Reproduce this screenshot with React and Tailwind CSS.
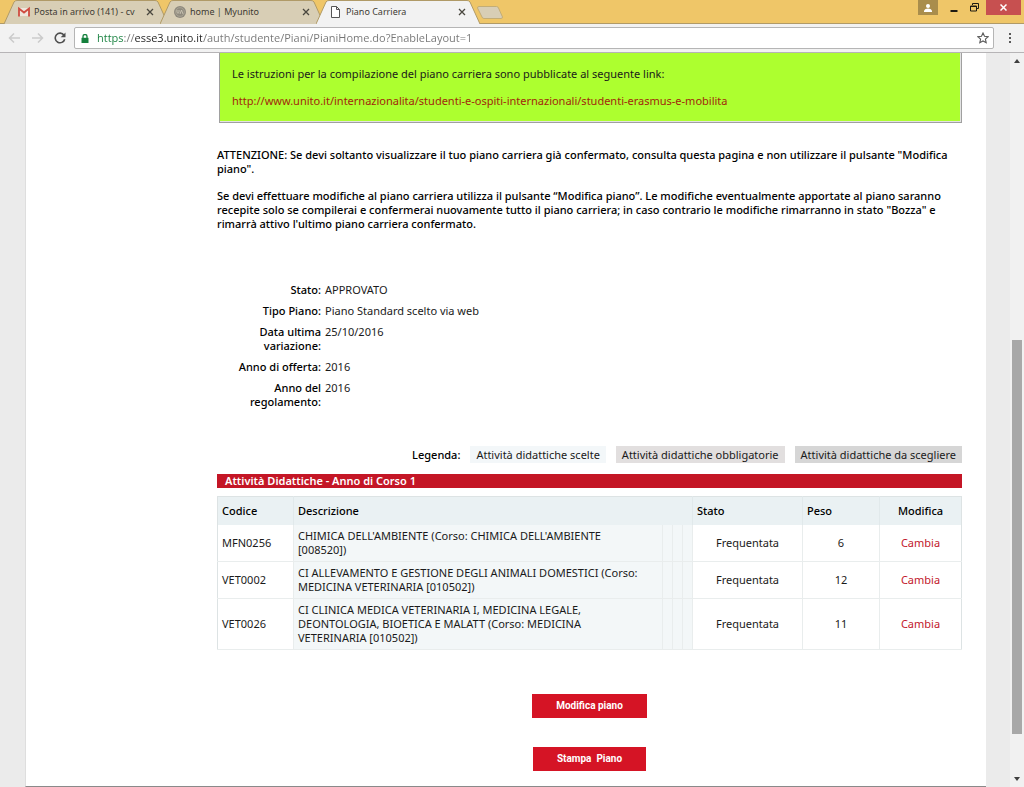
import React from 'react';

const tabs = [
  { title: 'Posta in arrivo (141) - cv', icon: 'mail', active: false },
  { title: 'home | Myunito', icon: 'unito', active: false },
  { title: 'Piano Carriera', icon: 'page', active: true },
];

const dettagli = [
  { label: 'Stato:', value: 'APPROVATO' },
  { label: 'Tipo Piano:', value: 'Piano Standard scelto via web' },
  { label: 'Data ultima variazione:', value: '25/10/2016' },
  { label: 'Anno di offerta:', value: '2016' },
  { label: 'Anno del regolamento:', value: '2016' },
];

const attivita = [
  {
    codice: 'MFN0256',
    descrizione: "CHIMICA DELL'AMBIENTE (Corso: CHIMICA DELL'AMBIENTE [008520])",
    stato: 'Frequentata',
    peso: 6,
  },
  {
    codice: 'VET0002',
    descrizione: 'CI ALLEVAMENTO E GESTIONE DEGLI ANIMALI DOMESTICI (Corso: MEDICINA VETERINARIA [010502])',
    stato: 'Frequentata',
    peso: 12,
  },
  {
    codice: 'VET0026',
    descrizione: 'CI CLINICA MEDICA VETERINARIA I, MEDICINA LEGALE, DEONTOLOGIA, BIOETICA E MALATT (Corso: MEDICINA VETERINARIA [010502])',
    stato: 'Frequentata',
    peso: 11,
  },
];

const TabIcon = ({ name }) => {
  if (name === 'mail') {
    return (
      <svg className="w-3 h-3 shrink-0" viewBox="0 0 12 12">
        <path d="M1 2h10v8H1z" fill="#eee6dc" />
        <path d="M1 10.500V2.500L6 6.500l5-4v8" fill="none" stroke="#cf4b3f" strokeWidth="1.800" />
      </svg>
    );
  }
  if (name === 'unito') {
    return (
      <svg className="w-3 h-3 shrink-0" viewBox="0 0 12 12">
        <circle cx="6" cy="6" r="6" fill="#8f8a7e" />
        <circle cx="6" cy="6" r="4.300" fill="none" stroke="#b9b2a0" strokeWidth="0.600" />
        <path d="M3 4v2.500q1 1.500 2 0V4M6 8l1.500-4L9 8" fill="none" stroke="#cdc6b4" strokeWidth="0.900" />
      </svg>
    );
  }
  return (
    <svg className="w-3 h-3 shrink-0" viewBox="0 0 12 12">
      <path d="M1.500 0.500h5l3 3v8h-8zM6.500 0.500v3h3" fill="#fff" stroke="#555" />
    </svg>
  );
};

const Tab = ({ tab }) => (
  <div className={`relative h-6 w-[164px] -mr-2 flex items-center pl-3.5 pr-3.5 ${tab.active ? 'z-10' : ''}`}>
    <svg className="absolute inset-0 w-full h-full" viewBox="0 0 164 24" preserveAspectRatio="none">
      <path
        d="M0 24L10 2Q11 0.500 13 0.500H151Q153 0.500 154 2L164 24"
        fill={tab.active ? '#f2f2f2' : '#d8ceb5'}
        stroke="#b09a67"
      />
    </svg>
    <button className="relative flex-1 min-w-0 flex items-center gap-1 text-left text-[9px] text-[#3d3a33]">
      <TabIcon name={tab.icon} />
      <span className="whitespace-nowrap">{tab.title}</span>
    </button>
    <button aria-label="Chiudi scheda" className="relative">
      <svg className="w-2 h-2" viewBox="0 0 8 8">
        <path d="M1 1l6 6M7 1L1 7" stroke="#4a473f" strokeWidth="1.300" />
      </svg>
    </button>
  </div>
);

const TabStrip = () => (
  <div className="h-6 bg-[#efc668] flex justify-between border-b border-[#b09a67]">
    <div className="flex pl-1">
      {tabs.map((tab) => (
        <Tab key={tab.title} tab={tab} />
      ))}
      <button aria-label="Nuova scheda" className="ml-1 pt-1.5 self-start">
        <svg className="w-7 h-[13px]" viewBox="0 0 28 13">
          <path d="M3 0.500h17.500q1.500 0 2 1.500l4 9q0 1.500-1.500 1.500H8q-1.500 0-2-1.500L1.500 2q0-1.500 1.500-1.500z" fill="#d8ceb5" stroke="#c3ad76" />
        </svg>
      </button>
    </div>
    <div className="flex items-start pr-[3px]">
      <button aria-label="Utente" className="w-5 h-[15px] bg-[#a98d4c] flex items-center justify-center mr-1.5">
        <svg className="w-2 h-2" viewBox="0 0 8 8">
          <circle cx="4" cy="2" r="2" fill="#fff" />
          <path d="M0 8V6.500Q1 4.500 4 4.500T8 6.500V8z" fill="#fff" />
        </svg>
      </button>
      <button aria-label="Riduci a icona" className="w-5 h-[15px] flex items-center justify-center">
        <svg className="w-2 h-2" viewBox="0 0 8 8">
          <path d="M0.500 7h7" stroke="#1d1a12" strokeWidth="2" />
        </svg>
      </button>
      <button aria-label="Ripristina" className="w-5 h-[15px] flex items-center justify-center mr-0.5">
        <svg className="w-[9px] h-[9px]" viewBox="0 0 9 9">
          <path d="M2.500 2V0.500h6v5H7M0.500 3h6v5h-6zM0.500 3.500h6" fill="none" stroke="#1d1a12" />
        </svg>
      </button>
      <button aria-label="Chiudi" className="w-[35px] h-[15px] bg-[#c75050] flex items-center justify-center">
        <svg className="w-[7px] h-[7px]" viewBox="0 0 7 7">
          <path d="M0.500 0.500l6 6M6.500 0.500l-6 6" stroke="#fff" strokeWidth="1.500" />
        </svg>
      </button>
    </div>
  </div>
);

const Toolbar = () => (
  <div className="h-[29px] bg-[#f2f2f2] border-b border-[#b6b4b6] flex items-center px-2 font-['Open_Sans',sans-serif]">
    <button aria-label="Indietro" className="mr-3">
      <svg className="w-3 h-3" viewBox="0 0 12 12">
        <path d="M12 6H1.500M6 1.500L1.500 6 6 10.500" fill="none" stroke="#cbcbcb" strokeWidth="1.500" />
      </svg>
    </button>
    <button aria-label="Avanti" className="mr-2.5">
      <svg className="w-3 h-3" viewBox="0 0 12 12">
        <path d="M0 6h10.500M6 1.500L10.500 6 6 10.500" fill="none" stroke="#cbcbcb" strokeWidth="1.500" />
      </svg>
    </button>
    <button aria-label="Ricarica" className="mr-2">
      <svg className="w-3 h-3" viewBox="0 0 12 12">
        <path d="M10 3.200A4.800 4.800 0 1 0 10.700 7.200" fill="none" stroke="#4f4f4f" strokeWidth="1.600" />
        <path d="M11.500 0.500v4.800H6.700z" fill="#4f4f4f" />
      </svg>
    </button>
    <div className="flex-1 h-[22px] bg-white border border-[#b5b5b5] rounded-xs flex items-center pl-1.5 pr-1 mr-3.5">
      <svg className="w-2 h-[9px] mr-2 shrink-0" viewBox="0 0 8 9">
        <path d="M2 4V2.500a2 2 0 0 1 4 0V4" fill="none" stroke="#15803d" strokeWidth="1.300" />
        <path d="M0.500 3.800h7V9h-7z" fill="#15803d" />
      </svg>
      <input
        type="text"
        aria-label="Indirizzo"
        defaultValue="https://esse3.unito.it/auth/studente/Piani/PianiHome.do?EnableLayout=1"
        className="flex-1 min-w-0 text-[11px] text-transparent bg-clip-text bg-[linear-gradient(90deg,#15803d_27px,#757575_27px,#757575_38px,#222222_38px,#222222_105px,#757575_105px)] focus:outline-none"
      />
      <button aria-label="Preferiti">
        <svg className="w-3 h-3" viewBox="0 0 12 12">
          <path d="M6 1l1.500 3.300 3.600 0.400-2.700 2.400 0.800 3.600L6 8.900l-3.200 1.800 0.800-3.600L0.900 4.700l3.600-0.400z" fill="none" stroke="#5a5a5a" strokeWidth="1.100" />
        </svg>
      </button>
    </div>
    <button aria-label="Menu">
      <svg className="w-1 h-3 mr-1" viewBox="0 0 4 12">
        <path d="M1 1h2v2H1zM1 5h2v2H1zM1 9h2v2H1z" fill="#5a5a5a" />
      </svg>
    </button>
  </div>
);

const Avviso = () => (
  <div className="ml-0.5 border-x border-b border-[#a0a0a0]">
    <div className="bg-[#adff2f] border-r border-b border-[#e3e3e3] px-3 pt-3.5 pb-[13px]">
      <p>Le istruzioni per la compilazione del piano carriera sono pubblicate al seguente link:</p>
      <p className="mt-[13px]">
        <a href="#" className="text-[#a2280c]">
          http://www.unito.it/internazionalita/studenti-e-ospiti-internazionali/studenti-erasmus-e-mobilita
        </a>
      </p>
    </div>
  </div>
);

const Legenda = () => (
  <div className="flex justify-end items-center gap-2.5 leading-[17px]">
    <span className="font-medium text-black">Legenda:</span>
    <span className="bg-[#f3f7f9] px-1.5">Attività didattiche scelte</span>
    <span className="bg-[#e2dfdf] px-1.5">Attività didattiche obbligatorie</span>
    <span className="bg-[#d6d6d6] px-1.5">Attività didattiche da scegliere</span>
  </div>
);

const PianoTable = () => (
  <table className="w-full table-fixed border-collapse border border-[#dde3e4] mt-2 leading-[14px]">
    <colgroup>
      <col className="w-[76px]" />
      <col />
      <col className="w-[10px]" />
      <col className="w-[10px]" />
      <col className="w-[10px]" />
      <col className="w-[110px]" />
      <col className="w-[77px]" />
      <col className="w-[82px]" />
    </colgroup>
    <thead>
      <tr className="bg-[#eaf1f3] text-left h-7 text-black">
        <th className="border-r border-[#e1e9eb] px-1 font-medium">Codice</th>
        <th colSpan={4} className="border-r border-[#e1e9eb] px-1 font-medium">Descrizione</th>
        <th className="border-r border-[#e1e9eb] px-1 font-medium">Stato</th>
        <th className="border-r border-[#e1e9eb] px-1 font-medium">Peso</th>
        <th className="px-1 font-medium text-center">Modifica</th>
      </tr>
    </thead>
    <tbody>
      {attivita.map((a) => (
        <tr key={a.codice} className="border-b border-[#e9eded]">
          <td className="border-r border-[#e9eded] px-1">{a.codice}</td>
          <td className="border-r border-[#e9eded] bg-[#f3f7f8] pl-1 pr-5 py-1">{a.descrizione}</td>
          <td className="border-r border-[#e9eded] bg-[#f3f7f8]"></td>
          <td className="border-r border-[#e9eded] bg-[#f3f7f8]"></td>
          <td className="border-r border-[#e9eded] bg-[#f3f7f8]"></td>
          <td className="border-r border-[#e9eded] text-center">{a.stato}</td>
          <td className="border-r border-[#e9eded] text-center">{a.peso}</td>
          <td className="text-center">
            <a href="#" className="text-[#c2182b]">Cambia</a>
          </td>
        </tr>
      ))}
    </tbody>
  </table>
);

const Scrollbar = () => (
  <div className="w-3.5 bg-[#f1f1f1] flex flex-col items-center justify-between py-1.5">
    <svg className="w-1.5 h-1" viewBox="0 0 6 4">
      <path d="M0 4l3-4 3 4z" fill="#404040" />
    </svg>
    <div className="flex-1 w-full flex flex-col pl-0.5 pr-0.5">
      <div className="grow-[277]"></div>
      <div className="grow-[393] bg-[#a8a8a8]"></div>
      <div className="grow-[43]"></div>
    </div>
    <svg className="w-1.5 h-1" viewBox="0 0 6 4">
      <path d="M0 0l3 4 3-4z" fill="#404040" />
    </svg>
  </div>
);

export default function App() {
  return (
    <div className="min-h-screen flex flex-col font-['Noto_Sans',sans-serif] text-[#1a1a1a]">
      <TabStrip />
      <Toolbar />
      <div className="flex-1 flex">
        <div className="flex-1 bg-[#ebebeb] flex pl-[25px] pr-6">
          <main className="flex-1 bg-white border-l border-b border-b-[#8a8a8a] border-l-[#dedede] pl-[191px] pr-6 pb-3 text-[11px] leading-[14px]">
            <Avviso />
            <div className="mt-[25px] font-medium text-black">
              <p>
                ATTENZIONE: Se devi soltanto visualizzare il tuo piano carriera già confermato, consulta questa pagina e
                non utilizzare il pulsante "Modifica piano".
              </p>
              <p className="mt-[13px]">
                Se devi effettuare modifiche al piano carriera utilizza il pulsante “Modifica piano”. Le modifiche
                eventualmente apportate al piano saranno recepite solo se compilerai e confermerai nuovamente tutto il
                piano carriera; in caso contrario le modifiche rimarranno in stato "Bozza" e rimarrà attivo l'ultimo
                piano carriera confermato.
              </p>
            </div>

            <dl className="mt-[52px] flex flex-col gap-[7px]">
              {dettagli.map((d) => (
                <div key={d.label} className="flex gap-1">
                  <dt className="w-[104px] pl-4 text-right font-medium text-black">{d.label}</dt>
                  <dd>{d.value}</dd>
                </div>
              ))}
            </dl>

            <div className="mt-[37px]">
              <Legenda />
            </div>
            <h2 className="mt-[11px] bg-[#c41626] text-white font-semibold px-2">Attività Didattiche - Anno di Corso 1</h2>
            <PianoTable />

            <div className="mt-11 flex flex-col items-center gap-[29px] font-['Roboto',sans-serif] text-[10px] font-bold text-white">
              <button className="bg-[#d51425] h-6 px-6">Modifica piano</button>
              <button className="bg-[#d51425] h-6 px-6 whitespace-pre">Stampa  Piano</button>
            </div>
          </main>
        </div>
        <Scrollbar />
      </div>
    </div>
  );
}
